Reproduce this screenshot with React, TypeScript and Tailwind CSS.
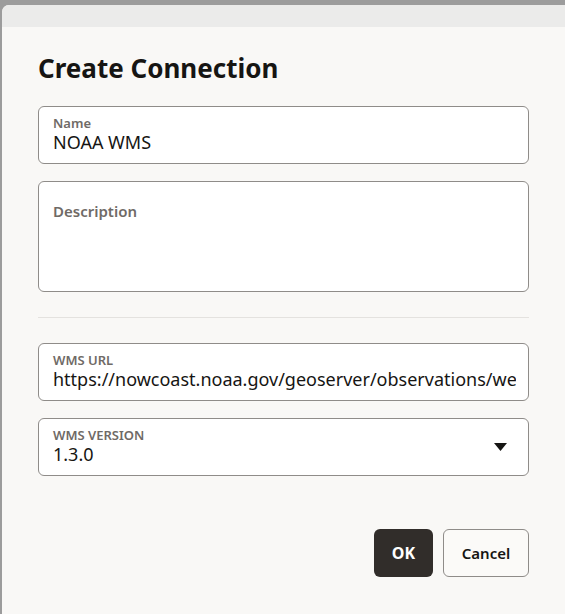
import React from "react";

function Field({ label, value, children }: { label: string; value?: string; children?: React.ReactNode }) {
  return (
    <div className="relative h-[58px] rounded-[6px] border border-[#8f8c89] bg-white pl-[14px] pr-[12px] pt-[9px]">
      <div className="text-[13px] font-semibold leading-[14px] text-[#6f6a66]">{label}</div>
      <div className="overflow-hidden whitespace-nowrap text-[18px] leading-[24px] text-[#161513]">{value}</div>
      {children}
    </div>
  );
}

export default function App() {
  return (
    <div className="h-[614px] w-[565px] overflow-hidden bg-[#9c9c9c] pl-[2px] pt-[5px]" style={{ fontFamily: '"Noto Sans", "Open Sans", sans-serif' }}>
      <div className="flex h-full flex-col overflow-hidden rounded-tl-[7px] bg-[#f9f8f6]">
        <div className="h-[22px] shrink-0 bg-[#ebebea]" />
        <div className="flex flex-1 flex-col px-[36px]">
          <h1 className="mt-[24px] text-[26px] font-bold leading-[34px] text-[#161513]">Create Connection</h1>
          <div className="mt-[21px] flex flex-col">
            <Field label="Name" value="NOAA WMS" />
            <div className="mt-[17px] h-[111px] rounded-[6px] border border-[#8f8c89] bg-white pl-[14px] pt-[18px]">
              <div className="text-[15px] font-semibold leading-[22px] text-[#6f6a66]">Description</div>
            </div>
            <div className="mt-[25px] h-px bg-[#e4e2df]" />
            <div className="mt-[25px]">
              <Field label="WMS URL" value="https://nowcoast.noaa.gov/geoserver/observations/weather_radar/ows" />
            </div>
            <div className="mt-[17px]">
              <Field label="WMS VERSION" value="1.3.0">
                <svg className="absolute right-[21px] top-[24px]" width="13" height="8" viewBox="0 0 13 8">
                  <path d="M0 0 L13 0 L6.5 8 Z" fill="#161513" />
                </svg>
              </Field>
            </div>
          </div>
          <div className="mt-[53px] flex justify-end gap-[10px]">
            <button className="h-[48px] w-[59px] rounded-[6px] bg-[#312d2a] text-[16px] font-bold text-white">OK</button>
            <button className="h-[48px] w-[86px] rounded-[6px] border border-[#8f8c89] bg-[#fbfaf8] text-[15px] font-semibold text-[#161513]">Cancel</button>
          </div>
        </div>
      </div>
    </div>
  );
}
